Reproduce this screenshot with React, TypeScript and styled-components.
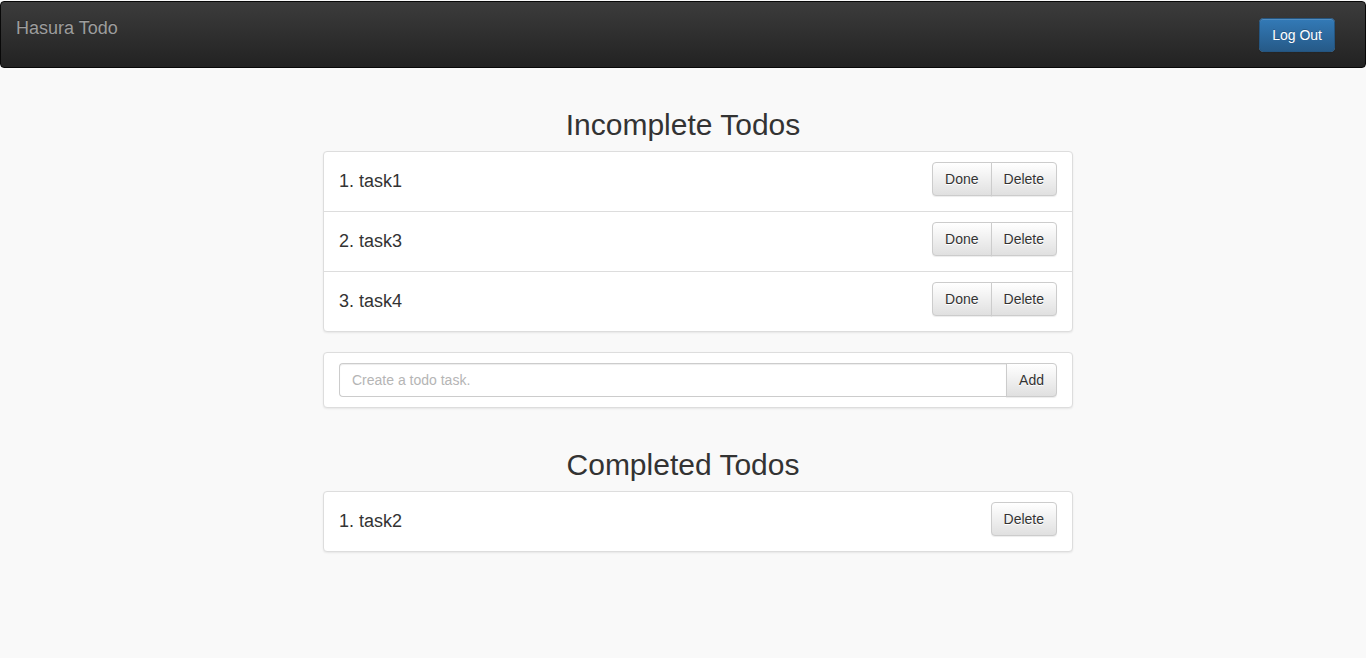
import React from "react";
import styled, { createGlobalStyle } from "styled-components";

const GlobalStyle = createGlobalStyle`
  * { box-sizing: border-box; }
  html, body { margin: 0; padding: 0; }
  body {
    background: #f9f9f9;
    font-family: "Liberation Sans", Arial, Helvetica, sans-serif;
    font-size: 14px;
    line-height: 1.42857;
    color: #333;
  }
`;

const Page = styled.div`
  padding-top: 1px;
`;

const Navbar = styled.nav`
  height: 67px;
  display: flex;
  align-items: flex-start;
  justify-content: space-between;
  background-image: linear-gradient(to bottom, #3c3c3c 0, #222 100%);
  border: 1px solid #080808;
  border-radius: 4px;
  padding: 0 30px 0 15px;
  margin-bottom: 40px;
`;

const Brand = styled.a`
  font-size: 18px;
  line-height: 20px;
  padding: 16px 0 15px;
  color: #9d9d9d;
  text-decoration: none;
  text-shadow: 0 -1px 0 rgba(0, 0, 0, 0.25);
`;

const PrimaryButton = styled.button`
  margin-top: 16px;
  height: 34px;
  padding: 6px 12px;
  font-family: inherit;
  font-size: 14px;
  line-height: 20px;
  color: #fff;
  text-shadow: 0 -1px 0 rgba(0, 0, 0, 0.2);
  background-image: linear-gradient(to bottom, #337ab7 0, #265a88 100%);
  border: 1px solid #245580;
  border-radius: 4px;
  box-shadow: inset 0 1px 0 rgba(255, 255, 255, 0.15), 0 1px 1px rgba(0, 0, 0, 0.075);
  cursor: pointer;
`;

const Container = styled.main`
  width: 750px;
  margin: 0 auto;
`;

const Heading = styled.h2<{ $top?: number }>`
  margin: ${(p) => p.$top ?? 0}px 0 10px;
  font-size: 30px;
  font-weight: 500;
  line-height: 1.1;
  text-align: center;
  color: #333;
`;

const Panel = styled.div`
  background: #fff;
  border: 1px solid #ddd;
  border-radius: 4px;
  box-shadow: 0 1px 2px rgba(0, 0, 0, 0.075);
  margin: 0 -15px 20px 15px;
`;

const Row = styled.div`
  height: 59px;
  display: flex;
  align-items: center;
  justify-content: space-between;
  padding: 0 15px;
  & + & {
    height: 60px;
    border-top: 1px solid #ddd;
  }
`;

const TaskText = styled.span`
  font-size: 18px;
  color: #333;
  margin-top: 1px;
`;

const ButtonGroup = styled.div`
  display: flex;
  margin-bottom: 5px;
`;

const DefaultButton = styled.button<{ $pos?: "left" | "right" | "single" }>`
  height: 34px;
  padding: 6px 12px;
  font-family: inherit;
  font-size: 14px;
  line-height: 20px;
  color: #333;
  text-shadow: 0 1px 0 #fff;
  background-image: linear-gradient(to bottom, #fff 0, #e0e0e0 100%);
  border: 1px solid #ccc;
  box-shadow: inset 0 1px 0 rgba(255, 255, 255, 0.15), 0 1px 1px rgba(0, 0, 0, 0.075);
  cursor: pointer;
  border-radius: ${(p) =>
    p.$pos === "left" ? "4px 0 0 4px" : p.$pos === "right" ? "0 4px 4px 0" : "4px"};
  margin-left: ${(p) => (p.$pos === "right" ? "-1px" : "0")};
`;

const SingleButton = styled(DefaultButton)`
  margin-bottom: 5px;
`;

const InputPanelBody = styled.div`
  padding: 10px 15px;
`;

const InputGroup = styled.div`
  display: flex;
`;

const TextInput = styled.input`
  flex: 1;
  height: 34px;
  padding: 6px 12px;
  font-family: inherit;
  font-size: 14px;
  color: #555;
  border: 1px solid #ccc;
  border-right: none;
  border-radius: 4px 0 0 4px;
  box-shadow: inset 0 1px 1px rgba(0, 0, 0, 0.075);
  outline: none;
  &::placeholder {
    color: #b5b5b5;
  }
`;

const incomplete = ["task1", "task3", "task4"];
const completed = ["task2"];

export default function App() {
  return (
    <Page>
      <GlobalStyle />
      <Navbar>
        <Brand href="#">Hasura Todo</Brand>
        <PrimaryButton>Log Out</PrimaryButton>
      </Navbar>
      <Container>
        <Heading>Incomplete Todos</Heading>
        <Panel>
          {incomplete.map((t, i) => (
            <Row key={t}>
              <TaskText>
                {i + 1}. {t}
              </TaskText>
              <ButtonGroup>
                <DefaultButton $pos="left">Done</DefaultButton>
                <DefaultButton $pos="right">Delete</DefaultButton>
              </ButtonGroup>
            </Row>
          ))}
        </Panel>
        <Panel>
          <InputPanelBody>
            <InputGroup>
              <TextInput placeholder="Create a todo task." />
              <DefaultButton $pos="right">Add</DefaultButton>
            </InputGroup>
          </InputPanelBody>
        </Panel>
        <Heading $top={40}>Completed Todos</Heading>
        <Panel>
          {completed.map((t, i) => (
            <Row key={t}>
              <TaskText>
                {i + 1}. {t}
              </TaskText>
              <SingleButton $pos="single">Delete</SingleButton>
            </Row>
          ))}
        </Panel>
      </Container>
    </Page>
  );
}
